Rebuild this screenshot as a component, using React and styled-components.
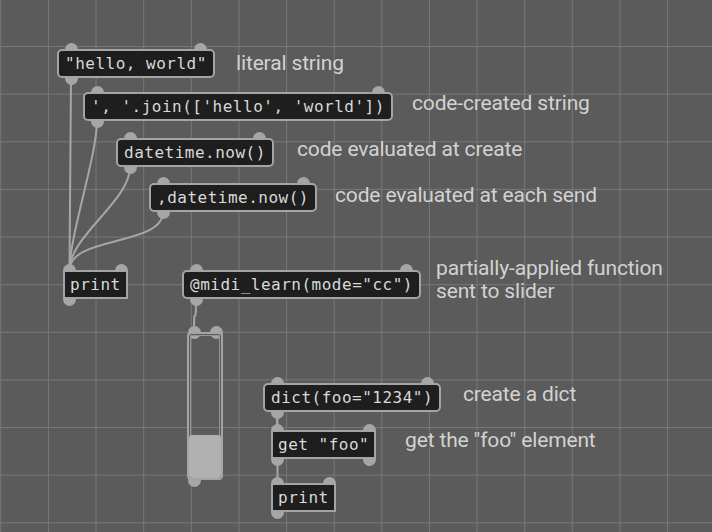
import React from "react";
import styled, { createGlobalStyle, css } from "styled-components";

const GlobalStyle = createGlobalStyle`
  html, body {
    margin: 0;
    padding: 0;
    background: #5b5b5b;
    overflow: hidden;
  }
`;

const Canvas = styled.div`
  position: relative;
  isolation: isolate;
  width: 712px;
  height: 532px;
  overflow: hidden;
  background-color: #5b5b5b;
  background-image:
    linear-gradient(to right, #777 0, #777 1.4px, transparent 1.4px),
    linear-gradient(to bottom, #777 0, #777 1.4px, transparent 1.4px);
  background-size: 47.63px 47.63px;
  background-position: 0.3px 0, 0 -1.6px;
`;

const Wires = styled.svg`
  position: absolute;
  inset: 0;
  width: 100%;
  height: 100%;
  pointer-events: none;
`;

const Wire = styled.path`
  fill: none;
  stroke: #a6a6a6;
  stroke-width: 2;
`;

const Node = styled.div`
  position: absolute;
  left: ${(p) => p.$x}px;
  top: ${(p) => p.$y}px;
`;

const Port = styled.span`
  position: absolute;
  width: 13px;
  height: 13px;
  border-radius: 50%;
  background: #a6a6a6;
  ${(p) => (p.$fromRight ? css`right: ${p.$at - 6.5}px;` : css`left: ${p.$at - 6.5}px;`)}
  ${(p) => (p.$side === "top" ? css`top: -6.5px;` : css`bottom: -6.5px;`)}
`;

const Box = styled.div`
  position: relative;
  box-sizing: border-box;
  height: 29px;
  display: flex;
  align-items: center;
  padding: 0 ${(p) => (p.$kind === "msg" ? 6 : 5)}px;
  background: #1e1e1e;
  border: 2px solid #a4a4a4;
  border-radius: ${(p) => (p.$kind === "msg" ? 5 : 0)}px;
  font-family: "DejaVu Sans Mono", "Liberation Mono", monospace;
  font-size: 16px;
  letter-spacing: 0.5px;
  color: #d9d9d9;
  white-space: pre;
`;

const SliderFrame = styled.div`
  position: relative;
  box-sizing: border-box;
  width: 36px;
  height: 148px;
  display: flex;
  flex-direction: column;
  justify-content: flex-end;
  border: 2px solid #a4a4a4;
  border-radius: 4px;
  box-shadow: inset 0 0 0 1px #5b5b5b, inset 0 0 0 2px #959595;
`;

const SliderFill = styled.div`
  position: relative;
  background: #b1b1b1;
  border-radius: 3px;
`;

const Note = styled.div`
  position: absolute;
  left: ${(p) => p.$x}px;
  top: ${(p) => p.$y}px;
  font-family: Roboto, "Liberation Sans", sans-serif;
  font-size: 21px;
  line-height: 23px;
  letter-spacing: -0.15px;
  color: #d2d2d2;
  white-space: pre;
`;

const PORT_INSET = { msg: 14, proc: 6.5, slider: 7 };
const BOX_H = 29;

const nodes = [
  { id: "hello", kind: "msg", x: 57, y: 49, text: '"hello, world"', ins: 2, outs: 1 },
  { id: "join", kind: "msg", x: 83, y: 92, text: "', '.join(['hello', 'world'])", ins: 2, outs: 1 },
  { id: "now", kind: "msg", x: 116, y: 138, text: "datetime.now()", ins: 2, outs: 1 },
  { id: "lazy", kind: "msg", x: 149, y: 183, text: ",datetime.now()", ins: 2, outs: 1 },
  { id: "print1", kind: "proc", x: 63, y: 270, text: "print", ins: 2, outs: 1 },
  { id: "midi", kind: "msg", x: 182, y: 270, text: '@midi_learn(mode="cc")', ins: 2, outs: 1 },
  { id: "slider", kind: "slider", x: 187, y: 332, value: 0.3, h: 148, ins: 2, outs: 1 },
  { id: "dict", kind: "msg", x: 263, y: 383, text: 'dict(foo="1234")', ins: 2, outs: 1 },
  { id: "get", kind: "proc", x: 271, y: 430, text: 'get "foo"', ins: 2, outs: 2 },
  { id: "print2", kind: "proc", x: 271, y: 483, text: "print", ins: 2, outs: 1 },
];

const links = [
  ["hello", "print1"],
  ["join", "print1"],
  ["now", "print1"],
  ["lazy", "print1"],
  ["midi", "slider"],
  ["dict", "get"],
  ["get", "print2"],
];

const notes = [
  { x: 236, y: 52, text: "literal string" },
  { x: 412, y: 92, text: "code-created string" },
  { x: 297, y: 138, text: "code evaluated at create" },
  { x: 335, y: 184, text: "code evaluated at each send" },
  { x: 436, y: 257, text: "partially-applied function\nsent to slider" },
  { x: 463, y: 383, text: "create a dict" },
  { x: 405, y: 429, text: 'get the "foo" element' },
];

const byId = Object.fromEntries(nodes.map((n) => [n.id, n]));

function wirePath(from, to) {
  const x1 = from.x + PORT_INSET[from.kind];
  const y1 = from.y + (from.h || BOX_H);
  const x2 = to.x + PORT_INSET[to.kind];
  const y2 = to.y;
  const d = 34;
  return `M${x1} ${y1} C${x1} ${y1 + d}, ${x2} ${y2 - d}, ${x2} ${y2}`;
}

function Ports({ node }) {
  const inset = PORT_INSET[node.kind];
  const ports = [];
  for (let i = 0; i < node.ins; i++) {
    ports.push(<Port key={"i" + i} $side="top" $at={inset} $fromRight={i === 1} />);
  }
  for (let i = 0; i < node.outs; i++) {
    ports.push(<Port key={"o" + i} $side="bottom" $at={inset} $fromRight={i === 1} />);
  }
  return ports;
}

function PatchNode({ node }) {
  return (
    <Node $x={node.x} $y={node.y}>
      <Ports node={node} />
      {node.kind === "slider" ? (
        <SliderFrame>
          <SliderFill style={{ height: `${node.value * 100}%` }} />
        </SliderFrame>
      ) : (
        <Box $kind={node.kind}>{node.text}</Box>
      )}
    </Node>
  );
}

export default function App() {
  return (
    <>
      <GlobalStyle />
      <Canvas>
        <Wires viewBox="0 0 712 532">
          {links.map(([a, b]) => (
            <Wire key={a + b} d={wirePath(byId[a], byId[b])} />
          ))}
        </Wires>
        {nodes.map((n) => (
          <PatchNode key={n.id} node={n} />
        ))}
        {notes.map((n) => (
          <Note key={n.text} $x={n.x} $y={n.y}>
            {n.text}
          </Note>
        ))}
      </Canvas>
    </>
  );
}
